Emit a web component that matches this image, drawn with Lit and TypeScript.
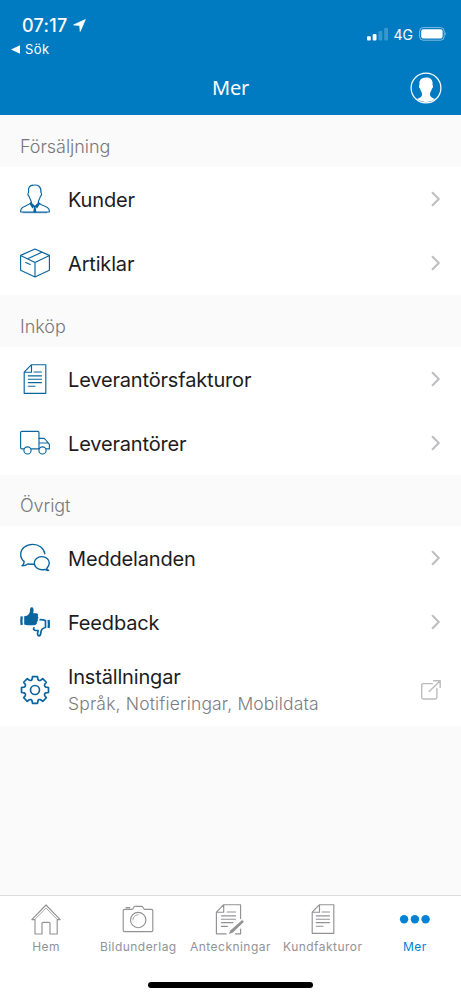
import { LitElement, html, svg, css, nothing, TemplateResult } from "lit";
import { customElement, property } from "lit/decorators.js";
import { classMap } from "lit/directives/class-map.js";

function gearPath(cx: number, cy: number): string {
  const pts: string[] = [];
  const at = (r: number, deg: number) => {
    const a = (deg * Math.PI) / 180;
    return `${(cx + r * Math.sin(a)).toFixed(2)} ${(cy - r * Math.cos(a)).toFixed(2)}`;
  };
  for (let i = 0; i < 8; i++) {
    const b = i * 45;
    pts.push(`${i ? "L" : "M"}${at(11.3, b - 15)} L${at(13.7, b - 10.5)} L${at(13.7, b + 10.5)} L${at(11.3, b + 15)} Q${at(9.6, b + 22.5)} ${at(11.3, b + 30)}`);
  }
  return pts.join(" ") + "Z";
}

const docLines = svg`
  <path d="M11.5 .7H25.8V29.3H4.2V8.2Z M11.5 .7V8.2H4.2"/>
  <path d="M14 8H21.5M8.3 11.8H21.5M8.3 15.2H21.5M8.3 18.6H21.5M8.3 22.2H15"/>`;

const icons: Record<string, TemplateResult> = {
  person: svg`
    <path d="M11.3 18.3C11.2 16.2 9.4 14.6 9.1 12.2C7.7 11.6 7.6 9.2 8.6 8.6C7.7 3.6 10 1 13.4 1.2C17.5 .3 21.6 2.6 20.9 8.6C21.9 9.2 21.8 11.6 20.4 12.2C20.1 14.6 18.4 16.2 18.3 18.3"/>
    <path d="M11.3 18.3C9.5 21.6 2.6 22 1.2 25C.7 26.2 .5 27.3 .6 28H29.4C29.5 27.3 29.3 26.2 28.8 25C27.4 22 20 21.6 18.3 18.3"/>
    <path class="solid" d="M10.8 18L14.8 21.7L18.8 18L19.8 20.3L17 24.4L15.6 22.7L16.4 28.4H13.2L14 22.7L12.4 24.4L9.8 20.3Z"/>
    <path class="fine" d="M3 28.7H27"/>`,
  box: svg`<path d="M15 1L29.4 7.4V22.3L15 29L.6 22.3V7.4Z M.6 7.4L15 14.4L29.4 7.4 M15 14.4V29 M7.6 10.8L21.8 4.3 M5.8 14.4L10.2 16.4"/>`,
  doc: docLines,
  truck: svg`
    <path d="M3.7 20.8H1.9Q.6 20.8 .6 19.5V4.7Q.6 3.4 1.9 3.4H17.7Q19 3.4 19 4.7V20.8H11.3"/>
    <path d="M19 10.3H23.2Q24.4 10.3 25.4 11.5L29.4 16.4V20.8H26.3M19.5 15H27.8"/>
    <circle cx="7.5" cy="22.4" r="3.6"/><circle cx="22.5" cy="22.4" r="3.6"/>`,
  chat: svg`
    <path class="firm" d="M13.7 21.2C11 21.5 9.5 21.2 7.8 20.9C6 22.5 4 22.8 2 22.8C3.7 21.7 4.2 20.5 4.2 18.6C1.9 16.8 .7 14.1 .7 11.3C.7 5.7 5.9 1.4 12.7 1.4C19 1.4 24 5.2 24.8 10.7"/>
    <path class="firm" d="M26.7 25.4C28.4 23.8 29.3 22.2 29.3 20.1C29.3 16.4 26 13.6 21.8 13.6C17.6 13.6 14.3 16.4 14.3 20.1C14.3 23.8 17.6 26.8 21.8 26.8C23 26.8 24 26.7 25 26.3C26.1 27.3 27.3 27.6 28.6 27.4C27.6 26.8 27 26.3 26.7 25.4Z"/>`,
  thumbs: svg`
    <path class="solid" d="M4.2 9.3C8 9 9.7 6.7 9.9 4.3C10 2 10.2.4 11.6.3C13.6.2 14 2.6 13.2 6.2H16.5C18.4 6.4 18.6 8.1 17.6 9C18.8 10 18.5 11.6 17.6 12.1C18.3 13.3 17.8 14.6 16.8 15C17.3 16.4 16.4 17.7 15 17.9C11.5 18.4 7.8 18.5 4.2 17.4Z"/>
    <path class="cuff" d="M1.7 9.4Q1.1 13.6 1.7 18 M28.6 12.8Q29.2 17 28.6 21"/>
    <path class="mid" d="M20.2 12.7C22.3 12.7 24.5 13 25.5 13.7V20.5C22.6 21 21.2 22.8 20.9 25.2C20.8 27.5 20.3 28.8 19 28.8C17.3 28.6 17.3 26.8 18.1 23.5H15.5C13.4 23.2 13.2 21.8 14 20.8"/>`,
  gear: svg`<path class="mid" d=${gearPath(15, 15)}/><circle class="mid" cx="15" cy="15" r="4.5"/>`,
  home: svg`
    <path d="M.8 15.6L15 1L29.2 15.6H26.2V30H19V19.4Q19 18.3 17.9 18.3H12.1Q11 18.3 11 19.4V30H4V15.6Z"/>
    <path class="fine" d="M4 15.2L15 4.1L26 15.2"/>`,
  camera: svg`
    <path d="M1.6 5.3H9C10.6 5.3 10.2 2.4 12 2.4H18.8C20.6 2.4 20.2 5.3 21.8 5.3H28.4Q29.8 5.3 29.8 6.7V26.2Q29.8 27.6 28.4 27.6H1.6Q.2 27.6 .2 26.2V6.7Q.2 5.3 1.6 5.3Z M3 3.6H6.8"/>
    <circle cx="15.2" cy="16" r="7.7"/>
    <path class="fine" d="M9.8 16Q10.2 11.2 15.2 10.6"/>`,
  notes: svg`
    <path d="M25.6 14.5V.7H8.7L1.4 8.2V29.8H11.2 M8.7 .7V8.2H1.4 M25.6 25V29.8H20.5"/>
    <path d="M12.2 8H20.5M6.4 11.8H20.5M6.4 15.2H20.5M6.4 18.6H18M6.4 22.4H12.3"/>
    <path class="solid" d="M27.2 16L28.9 17.7L17.9 28.6L13.9 30L15.3 26.4Z"/>`,
  invoice: docLines,
  dots: svg`<circle class="solid" cx="4.1" cy="15.3" r="4.2"/><circle class="solid" cx="14.9" cy="15.3" r="4.2"/><circle class="solid" cx="25.6" cy="15.3" r="4.2"/>`,
};

@customElement("line-icon")
export class LineIcon extends LitElement {
  @property() name = "";
  static styles = css`
    :host { display: block; width: 30px; height: 30px; flex: none; }
    svg { display: block; overflow: visible; fill: none; stroke: currentColor; stroke-width: 1.15; stroke-linejoin: round; stroke-linecap: round; }
    .solid { fill: currentColor; stroke: none; }
    .cuff { stroke-width: 2.3; stroke-linecap: butt; }
    .firm { stroke-width: 1.4; }
    .mid { stroke-width: 1.7; }
    .fine { stroke-width: 0.8; }
  `;
  render() {
    return html`<svg width="30" height="30" viewBox="0 0 30 30">${icons[this.name]}</svg>`;
  }
}

interface Row { icon: string; label: string; detail?: string; }

const sections: { title: string; rows: Row[] }[] = [
  { title: "Försäljning", rows: [{ icon: "person", label: "Kunder" }, { icon: "box", label: "Artiklar" }] },
  { title: "Inköp", rows: [{ icon: "doc", label: "Leverantörsfakturor" }, { icon: "truck", label: "Leverantörer" }] },
  {
    title: "Övrigt",
    rows: [
      { icon: "chat", label: "Meddelanden" },
      { icon: "thumbs", label: "Feedback" },
      { icon: "gear", label: "Inställningar", detail: "Språk, Notifieringar, Mobildata" },
    ],
  },
];

const tabs = [
  { icon: "home", label: "Hem" },
  { icon: "camera", label: "Bildunderlag" },
  { icon: "notes", label: "Anteckningar" },
  { icon: "invoice", label: "Kundfakturor" },
  { icon: "dots", label: "Mer", active: true },
];

@customElement("app-root")
export class AppRoot extends LitElement {
  static styles = css`
    :host { display: flex; flex-direction: column; height: 998px; background: #fafafa; font-family: Inter, "Liberation Sans", sans-serif; color: #1c1c1e; overflow: hidden; }
    * { box-sizing: border-box; }
    svg { display: block; flex: none; }
    header { height: 115px; flex: none; background: #007ac0; color: #fff; }
    .status { height: 62px; display: flex; justify-content: space-between; padding: 14px 14px 0 11px; }
    .clock { display: flex; align-items: center; gap: 5px; height: 22px; padding-left: 11px; font-size: 18px; font-weight: 500; letter-spacing: 0.3px; }
    .back { display: flex; align-items: center; gap: 5px; height: 20px; margin-top: 3px; font-size: 13px; font-weight: 400; letter-spacing: 0.4px; }
    .radio { display: flex; align-items: center; height: 40px; font-size: 14px; font-weight: 400; }
    .network { margin: 0 6px 0 6px; }
    .bar { height: 53px; display: grid; grid-template-columns: 50px 1fr 50px; align-items: center; text-align: center; }
    .title { font: 400 20px "Noto Sans", sans-serif; padding-bottom: 2px; letter-spacing: -0.2px; }
    .avatar { justify-self: start; margin: 0 0 1px -1px; }
    h2 { margin: 0; height: 52px; padding: 10px 20px 0; line-height: 43px; font-size: 18px; font-weight: 300; color: #77777b; letter-spacing: -0.05px; }
    section:last-child h2 { height: 51px; line-height: 41px; }
    .row { height: 64px; display: flex; align-items: center; padding: 0 20px 0 19.5px; background: #fff; }
    .row.tall { height: 72px; }
    .icon { color: #0a659f; }
    .text { flex: 1; margin-left: 18.5px; white-space: nowrap; }
    .label { font-size: 20px; line-height: 28px; padding-top: 1px; letter-spacing: -0.17px; }
    .tall .label { padding-top: 0; }
    .detail { font-size: 17.5px; line-height: 26px; font-weight: 300; color: #7c7c80; letter-spacing: 0.16px; }
    main { flex: 1; }
    nav { height: 103px; flex: none; background: #fff; border-top: 1px solid #dcdcdc; display: flex; flex-direction: column; align-items: center; }
    .tabs { display: grid; grid-template-columns: repeat(5, 1fr); width: 100%; height: 86px; }
    .tab { display: flex; flex-direction: column; align-items: center; padding-top: 8px; color: #929295; white-space: nowrap; font-size: 12px; font-weight: 400; line-height: 16px; gap: 5px; letter-spacing: 0.46px; }
    .tab.active { color: #0083d6; }
    .handle { width: 165px; height: 6px; border-radius: 3px; background: #000; }
  `;

  private trailing(row: Row) {
    return row.detail
      ? html`<svg width="20" height="20" viewBox="0 0 20 20" fill="none" stroke="#bcbcbe" stroke-width="1.4" stroke-linecap="round" stroke-linejoin="round"><path d="M11.3 3.6H2.4Q.7 3.6 .7 5.3V17.3Q.7 19 2.4 19H14.2Q15.9 19 15.9 17.3V8.6M8.2 11.6L19 .9M12.6 .8H19.2V7.4"/></svg>`
      : html`<svg width="10" height="16" viewBox="0 0 10 16" fill="none" stroke="#bfbfc2" stroke-width="2.1" stroke-linecap="round" stroke-linejoin="round"><path d="M1.6 1.8L7.8 8L1.6 14.2"/></svg>`;
  }

  render() {
    return html`
      <header>
        <div class="status">
          <div>
            <div class="clock"><span>07:17</span>
              <svg width="13" height="13" viewBox="0 0 13 13"><path fill="#fff" stroke="#fff" stroke-width=".8" stroke-linejoin="round" d="M12.3 .6L7.2 12.4L6.7 6.4L.6 5.9Z"/></svg>
            </div>
            <div class="back">
              <svg width="9" height="9" viewBox="0 0 9 9"><path fill="#fff" d="M0 4.5L9 .2V8.8Z"/></svg><span>Sök</span>
            </div>
          </div>
          <div class="radio">
            <svg width="21" height="14" viewBox="0 0 21 14" fill="#fff"><rect y="9.3" width="3.8" height="4.2" rx="1"/><rect x="5.7" y="7" width="3.8" height="6.5" rx="1"/><rect x="11.5" y="4" width="3.8" height="9.5" rx="1" opacity=".22"/><rect x="17.2" y=".8" width="3.8" height="12.7" rx="1" opacity=".22"/></svg>
            <span class="network">4G</span>
            <svg width="28" height="14" viewBox="0 0 28 14"><rect x=".6" y=".6" width="24.6" height="12.6" rx="3.6" fill="none" stroke="#fff" stroke-opacity=".5"/><rect x="2.2" y="2.2" width="21.4" height="9.4" rx="2" fill="#fff"/><path d="M26.4 4.8Q28 6.9 26.4 9Z" fill="#fff" opacity=".5"/></svg>
          </div>
        </div>
        <div class="bar">
          <span></span>
          <span class="title">Mer</span>
          <svg class="avatar" width="32" height="32" viewBox="0 0 32 32"><circle cx="16" cy="16" r="14.9" fill="none" stroke="#fff" stroke-width="1.2"/><path fill="#fff" d="M16 5.4C20.8 5.2 23.2 8 22.5 13C23.3 13.7 23.2 15.7 22 16.6C21.4 19 20 20.5 19.8 22.3C20 25 22.4 26.2 25 27A14.5 14.5 0 0 1 7 27C9.6 26.2 12 25 12.2 22.3C12 20.5 10.6 19 10 16.6C8.8 15.7 8.7 13.7 9.5 13C8.8 8 11.2 5.6 16 5.4Z"/></svg>
        </div>
      </header>
      <main>
        ${sections.map((s) => html`<section>
          <h2>${s.title}</h2>
          ${s.rows.map((r) => html`<div class=${classMap({ row: true, tall: !!r.detail })}>
            <line-icon class="icon" name=${r.icon}></line-icon>
            <div class="text"><div class="label">${r.label}</div>${r.detail ? html`<div class="detail">${r.detail}</div>` : nothing}</div>
            ${this.trailing(r)}
          </div>`)}
        </section>`)}
      </main>
      <nav>
        <div class="tabs">
          ${tabs.map((t) => html`<div class=${classMap({ tab: true, active: !!t.active })}><line-icon name=${t.icon}></line-icon><span>${t.label}</span></div>`)}
        </div>
        <div class="handle"></div>
      </nav>`;
  }
}
